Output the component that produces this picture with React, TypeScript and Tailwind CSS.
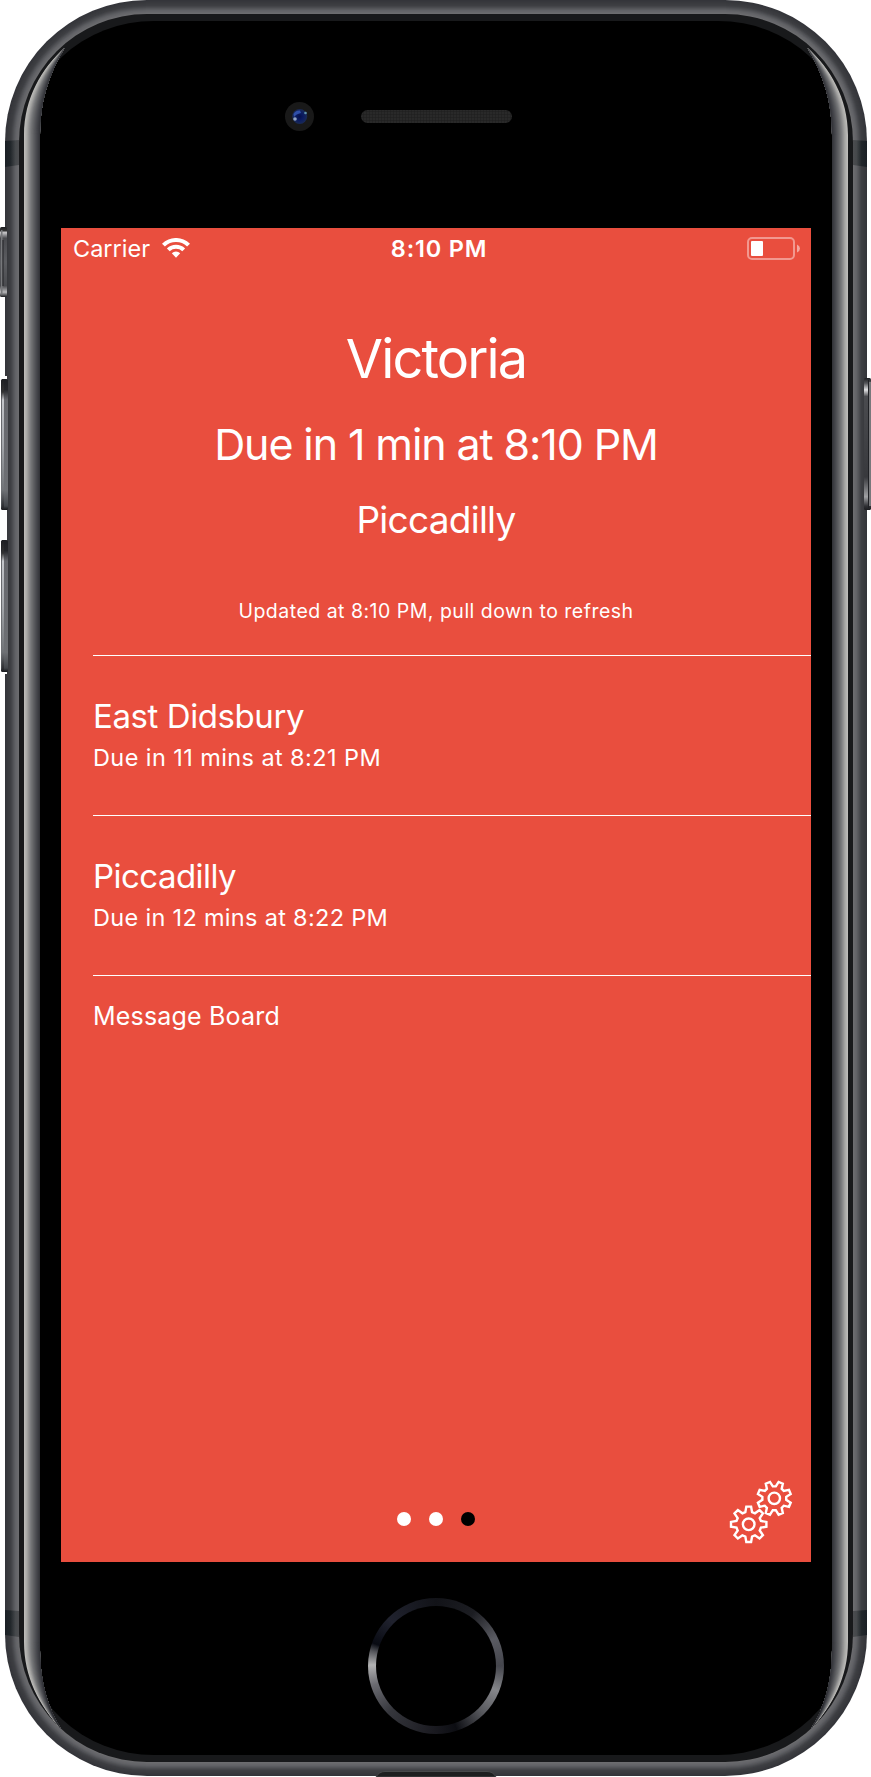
import React from "react";

function lerp(a: number[], b: number[], t: number) {
  return `rgb(${a.map((v, i) => Math.round(v + (b[i] - v) * t)).join(",")})`;
}

function ramp(stops: [number, number[]][], t: number) {
  for (let i = 1; i < stops.length; i++) {
    if (t <= stops[i][0]) {
      const [p, a] = stops[i - 1];
      const [q, b] = stops[i];
      return lerp(a, b, (t - p) / (q - p));
    }
  }
  const last = stops[stops.length - 1][1];
  return lerp(last, last, 0);
}

const BAND: [number, number[]][] = [
  [0, [52, 53, 58]],
  [0.4, [62, 63, 67]],
  [0.75, [96, 97, 101]],
  [1, [108, 108, 111]],
];

const GLOSS: [number, number[]][] = [
  [0, [188, 187, 184]],
  [0.15, [168, 168, 166]],
  [0.4, [118, 119, 121]],
  [0.7, [78, 79, 83]],
  [0.95, [50, 51, 56]],
  [1, [40, 41, 45]],
];

// Curved glass edge along one side of the phone, tapering at both corners.
function Gloss() {
  return (
    <g>
      {Array.from({ length: 17 }, (_, i) => {
        const t = i / 16;
        const x = 24 + i;
        const top = `C${x} ${98 + 4 * t} ${42 + 6 * t} ${68 + 8 * t} 64.5 48`;
        const bottom = `C${39 + 7 * t} ${1705 + 4 * t} ${x} ${1677 + 4 * t} ${x} 1642`;
        return (
          <path
            key={i}
            fill={ramp(GLOSS, t)}
            d={`M${x} 135${top}C48 76 40 102 40 135V1650C40 1680 47 1706 61 1729${bottom}Z`}
          />
        );
      })}
    </g>
  );
}

function PhoneBody() {
  return (
    <svg className="absolute inset-0" width="871" height="1777" viewBox="0 0 871 1777">
      <defs>
        <linearGradient id="key" x1="0" x2="0" y1="0" y2="1">
          <stop offset="0" stopColor="#1e1f23" />
          <stop offset="0.08" stopColor="#25262a" />
          <stop offset="0.16" stopColor="#66676c" />
          <stop offset="0.85" stopColor="#6e7074" />
          <stop offset="0.97" stopColor="#43464b" />
          <stop offset="1" stopColor="#15171a" />
        </linearGradient>
        <linearGradient id="keyEdge" x1="0" x2="0" y1="0" y2="1">
          <stop offset="0" stopColor="#1e1f23" />
          <stop offset="0.1" stopColor="#333" />
          <stop offset="0.16" stopColor="#c3c5c9" />
          <stop offset="0.5" stopColor="#a4a7ab" />
          <stop offset="0.85" stopColor="#6f7276" />
          <stop offset="1" stopColor="#1e1f23" />
        </linearGradient>
        <linearGradient id="mute" x1="0" x2="0" y1="0" y2="1">
          <stop offset="0" stopColor="#1b1c1f" />
          <stop offset="0.05" stopColor="#333" />
          <stop offset="0.08" stopColor="#c8c8ca" />
          <stop offset="0.16" stopColor="#4a4b4f" />
          <stop offset="0.5" stopColor="#5c5d61" />
          <stop offset="0.84" stopColor="#4a4b4f" />
          <stop offset="0.93" stopColor="#b8b8ba" />
          <stop offset="1" stopColor="#1b1c1f" />
        </linearGradient>
        <linearGradient id="power" x1="0" x2="0" y1="0" y2="1">
          <stop offset="0" stopColor="#1b1c1f" />
          <stop offset="0.04" stopColor="#55565a" />
          <stop offset="0.09" stopColor="#e2e2e4" />
          <stop offset="0.14" stopColor="#4a4b4f" />
          <stop offset="0.75" stopColor="#38393d" />
          <stop offset="0.9" stopColor="#a0a1a4" />
          <stop offset="0.97" stopColor="#303135" />
          <stop offset="1" stopColor="#1b1c1f" />
        </linearGradient>
        <linearGradient id="antenna" x1="0" x2="1">
          <stop offset="0" stopColor="#1a1f25" />
          <stop offset="0.4" stopColor="#22272b" />
          <stop offset="0.75" stopColor="#45484b" />
          <stop offset="1" stopColor="#4c4d50" />
        </linearGradient>
        <radialGradient id="lens">
          <stop offset="0" stopColor="#06104a" />
          <stop offset="0.5" stopColor="#0b1c62" />
          <stop offset="1" stopColor="#1a2a55" />
        </radialGradient>
        <pattern id="mesh" width="3" height="3" patternUnits="userSpaceOnUse">
          <rect width="3" height="3" fill="#292929" />
          <path d="M0 0H3M0 0V3" stroke="#1d1d1d" strokeWidth="1" />
        </pattern>
      </defs>
      {Array.from({ length: 14 }, (_, i) => (
        <rect
          key={i}
          x={5 + i}
          y={i}
          width={862 - 2 * i}
          height={1776 - 2 * i}
          rx={142 - i}
          fill={ramp(BAND, i / 13)}
        />
      ))}
      <path d="M5 141L19 140V165L5 167Z" fill="url(#antenna)" />
      <path d="M5 1610L19 1611V1637L5 1635Z" fill="url(#antenna)" />
      <path d="M5 141L19 140V165L5 167Z" fill="url(#antenna)" transform="matrix(-1 0 0 1 872 0)" />
      <path d="M5 1610L19 1611V1637L5 1635Z" fill="url(#antenna)" transform="matrix(-1 0 0 1 872 0)" />
      <rect x="19" y="14" width="834" height="1748" rx="128" fill="#18191b" />
      <rect x="24" y="21" width="824" height="1734" rx="130" ry="122" fill="#000" />
      <Gloss />
      <g transform="matrix(-1 0 0 1 872 0)">
        <Gloss />
      </g>
      <rect x="5" y="376" width="2" height="298" fill="#fff" />
      <rect x="0" y="227" width="7" height="70" rx="1.5" fill="url(#mute)" />
      <rect x="1" y="230" width="1.5" height="64" fill="#77787b" />
      <rect x="2.5" y="240" width="1" height="46" fill="#222327" />
      <rect x="1" y="379" width="7" height="131" rx="1.5" fill="url(#key)" />
      <rect x="2" y="379" width="2" height="131" fill="url(#keyEdge)" />
      <rect x="1" y="540" width="7" height="132" rx="1.5" fill="url(#key)" />
      <rect x="2" y="540" width="2" height="132" fill="url(#keyEdge)" />
      <rect x="864" y="378" width="7" height="132" rx="1.5" fill="url(#power)" />
      <rect x="868" y="380" width="1" height="128" fill="#1f2024" />
      <rect x="869" y="382" width="2" height="124" fill="#77787b" />
      <circle cx="299.5" cy="116.5" r="14.5" fill="#191919" />
      <circle cx="299.7" cy="116.5" r="7.5" fill="url(#lens)" />
      <path d="M293.5 114A6.5 6.5 0 0 1 300 110.5L301 113Q296 114 294 117Z" fill="#2f4fa8" />
      <circle cx="295" cy="119" r="1.8" fill="#8fa3c4" />
      <circle cx="305.5" cy="113" r="1.3" fill="#5f93b0" />
      <rect x="361" y="110" width="151" height="13" rx="6.5" fill="url(#mesh)" />
      <path d="M376 1777Q379 1771.5 385 1771.5H487Q493 1771.5 496 1777Z" fill="#1d1e1f" stroke="#47494a" strokeWidth="1" />
    </svg>
  );
}

function gearPath(cx: number, cy: number, r: number, turn: number) {
  const pts: string[] = [];
  const root = r * 0.69;
  const tip = r * 0.135;
  const base = r * 0.19;
  for (let i = 0; i < 8; i++) {
    const a = ((i * 45 + turn) * Math.PI) / 180;
    const at = (u: number, v: number) =>
      `${(cx + u * Math.sin(a) + v * Math.cos(a)).toFixed(2)} ${(cy - u * Math.cos(a) + v * Math.sin(a)).toFixed(2)}`;
    pts.push(at(root, -base), at(r, -tip), at(r, tip), at(root, base));
  }
  return `M${pts.join("L")}Z`;
}

function Gears() {
  return (
    <svg width="66" height="66" viewBox="728 1479 66 66" fill="none" stroke="#fff" strokeWidth="2.4">
      <path d={gearPath(774.3, 1498.3, 16.8, 22.5)} />
      <circle cx="774.3" cy="1498.3" r="5.7" />
      <path d={gearPath(748.7, 1524.3, 17.7, 0)} />
      <circle cx="748.7" cy="1524.3" r="5.8" />
    </svg>
  );
}

function Wifi() {
  return (
    <svg className="ml-[12px] mt-[10px]" width="28" height="20" viewBox="0 0 28 20" fill="#fff">
      <path d="M0 5.7A20 20 0 0 1 28 5.7L25.1 8.6A16 16 0 0 0 2.9 8.6Z" />
      <path d="M4.9 10.5A13 13 0 0 1 23.1 10.5L20.3 13.2A9.2 9.2 0 0 0 7.7 13.2Z" />
      <path d="M9.8 15.3A6 6 0 0 1 18.2 15.3L14 19.7Z" />
    </svg>
  );
}

function Battery() {
  return (
    <svg width="54" height="24" viewBox="0 0 54 24">
      <rect x="1" y="1" width="46" height="21" rx="4" fill="none" stroke="#fff" strokeOpacity="0.42" strokeWidth="2" />
      <rect x="4" y="4" width="12" height="15" rx="1" fill="#fff" />
      <path d="M50 7.5Q53 9 53 11.5T50 15.5Z" fill="#fff" fillOpacity="0.5" />
    </svg>
  );
}

const departures = [
  { to: "East Didsbury", due: "Due in 11 mins at 8:21 PM", toGap: "tracking-[-0.42px]", dueGap: "tracking-[0.41px]" },
  { to: "Piccadilly", due: "Due in 12 mins at 8:22 PM", toGap: "tracking-[-0.55px]", dueGap: "tracking-[0.31px]" },
];

export default function App() {
  return (
    <div className="relative flex h-[1777px] w-[871px] flex-col items-center overflow-hidden bg-white pt-[228px] font-[Inter,sans-serif] text-white">
      <PhoneBody />
      <main className="relative ml-[1px] flex h-[1334px] w-[750px] shrink-0 flex-col bg-[#e94e3e]">
        <header className="grid h-[41px] grid-cols-3">
          <div className="flex pl-[12px] text-[23.5px] leading-[41px]">
            Carrier
            <Wifi />
          </div>
          <div className="pl-[6px] text-center text-[23.5px] font-semibold leading-[41px] tracking-[0.8px]">8:10 PM</div>
          <div className="flex justify-end pr-[10px] pt-[9px]">
            <Battery />
          </div>
        </header>
        <section className="flex h-[386px] flex-col items-center whitespace-nowrap">
          <h1 className="mt-[49px] text-[54px] leading-[81px] tracking-[-1.86px]">Victoria</h1>
          <p className="text-[43px] leading-[90px] tracking-[-1.1px]">Due in 1 min at 8:10 PM</p>
          <p className="text-[37px] leading-[61px] tracking-[-0.74px]">Piccadilly</p>
          <p className="mt-[31px] text-[19.5px] leading-[60px] tracking-[0.49px]">Updated at 8:10 PM, pull down to refresh</p>
        </section>
        <ul className="ml-[32px]">
          {departures.map((d) => (
            <li key={d.due} className="h-[160px] border-t border-white pt-[37px]">
              <h2 className={`text-[33px] leading-[46px] ${d.toGap}`}>{d.to}</h2>
              <p className={`mt-[1px] text-[23.5px] leading-[35px] ${d.dueGap}`}>{d.due}</p>
            </li>
          ))}
          <li className="border-t border-white pt-[20px] text-[25px] leading-[40px] tracking-[0.19px]">Message Board</li>
        </ul>
        <nav className="absolute bottom-[36px] left-0 flex w-full justify-center gap-[18px]">
          <span className="size-[14px] rounded-full bg-white" />
          <span className="size-[14px] rounded-full bg-white" />
          <span className="size-[14px] rounded-full bg-black" />
        </nav>
        <div className="absolute bottom-[17px] right-[17px]">
          <Gears />
        </div>
      </main>
      <div className="relative ml-[1px] mt-[36px] size-[136px] shrink-0 rounded-full bg-[conic-gradient(#121318_0deg,#1c1d22_35deg,#5a5b62_65deg,#45464d_90deg,#85868a_112deg,#58595e_135deg,#0c0d12_162deg,#1a1a20_182deg,#35363c_225deg,#6a6a70_253deg,#b2b2b3_271deg,#55565b_283deg,#080a12_290deg,#20222e_315deg,#121318_360deg)] p-[8px]">
        <div className="size-full rounded-full bg-black" />
      </div>
    </div>
  );
}
